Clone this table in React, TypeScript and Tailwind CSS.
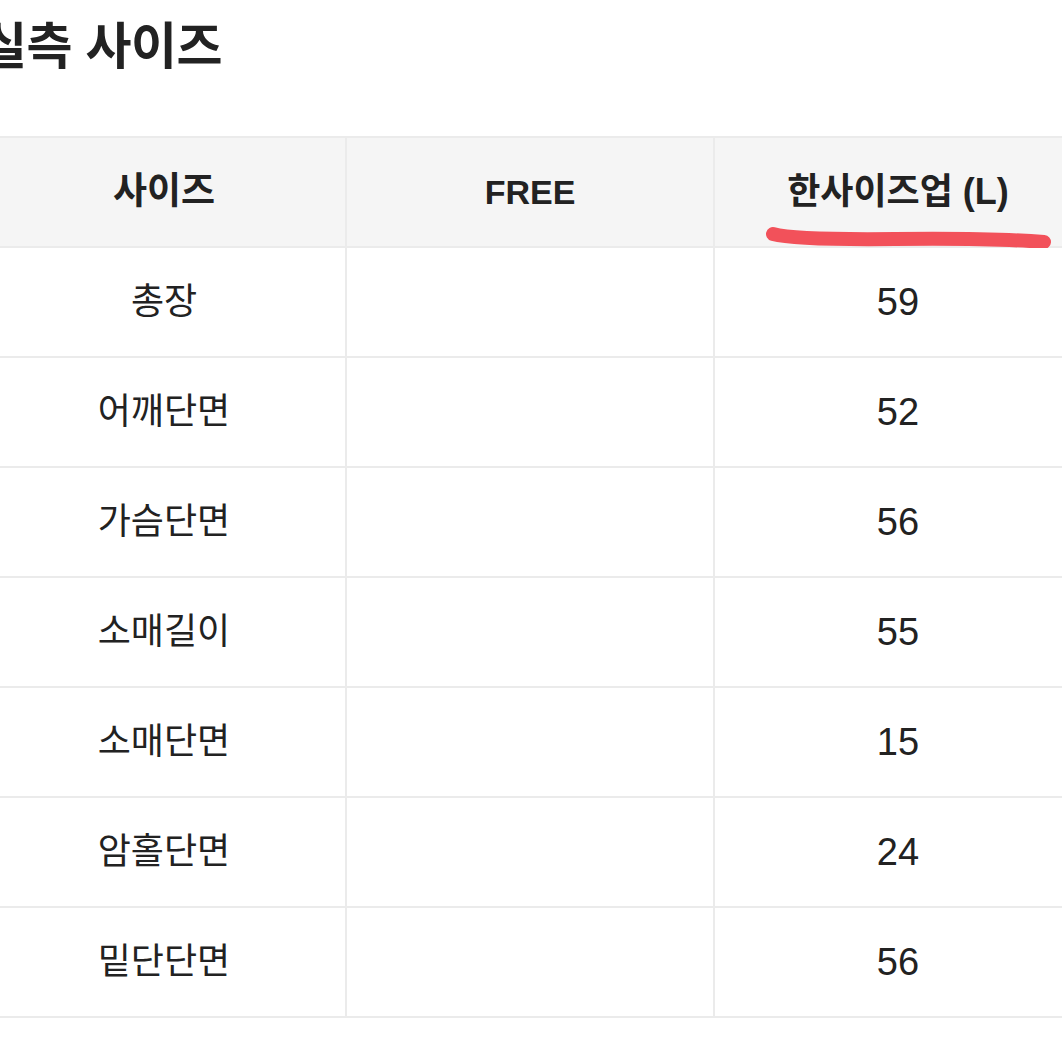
import React from "react";

const rows: [string, string, string][] = [
  ["총장", "", "59"],
  ["어깨단면", "", "52"],
  ["가슴단면", "", "56"],
  ["소매길이", "", "55"],
  ["소매단면", "", "15"],
  ["암홀단면", "", "24"],
  ["밑단단면", "", "56"],
];

export default function App() {
  return (
    <div
      className="w-[1062px] h-[1062px] overflow-hidden bg-white text-[#222222]"
      style={{ fontFamily: '"Liberation Sans", "Noto Sans CJK KR", sans-serif' }}
    >
      <div className="ml-[-19px] w-[1100px]">
        <h1 className="h-[96px] pt-[13px] text-[50px] font-bold leading-[68px] tracking-[-0.5px]">
          실측 사이즈
        </h1>
        <table className="mt-[40px] border-collapse table-fixed w-[1100px]">
          <colgroup>
            <col className="w-[364px]" />
            <col className="w-[368px]" />
            <col className="w-[368px]" />
          </colgroup>
          <thead>
            <tr className="h-[110px] bg-[#f5f5f5]">
              <th className="border-2 border-[#ebebeb] text-[37px] font-bold text-center align-middle">
                사이즈
              </th>
              <th className="border-2 border-[#ebebeb] text-[34px] font-bold text-center align-middle">
                FREE
              </th>
              <th className="relative border-2 border-[#ebebeb] text-[36px] font-bold text-center align-middle">
                한사이즈업 (L)
                <svg
                  className="absolute left-0 top-0 pointer-events-none"
                  width="368"
                  height="110"
                  viewBox="0 0 368 110"
                >
                  <path
                    d="M58 96 Q 80 102 180 101 T 329 104"
                    stroke="#f2515a"
                    strokeWidth="14"
                    strokeLinecap="round"
                    fill="none"
                  />
                </svg>
              </th>
            </tr>
          </thead>
          <tbody>
            {rows.map((r) => (
              <tr key={r[0]} className="h-[110px]">
                <td className="border-2 border-[#ebebeb] text-[36px] text-center align-middle">
                  {r[0]}
                </td>
                <td className="border-2 border-[#ebebeb] text-[36px] text-center align-middle">
                  {r[1]}
                </td>
                <td className="border-2 border-[#ebebeb] text-[38px] text-center align-middle">
                  {r[2]}
                </td>
              </tr>
            ))}
          </tbody>
        </table>
      </div>
    </div>
  );
}
